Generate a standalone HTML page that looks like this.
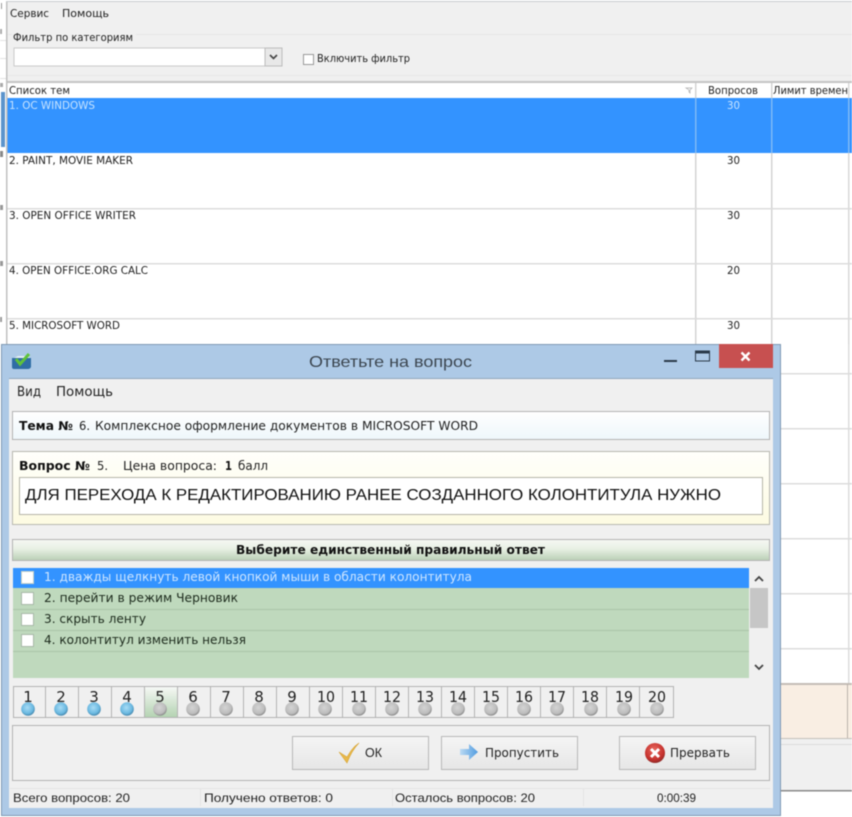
<!DOCTYPE html>
<html lang="ru"><head><meta charset="utf-8"><title>Ответьте на вопрос</title>
<style>
html,body{margin:0;padding:0;background:#fff;width:852px;height:817px;overflow:hidden}
svg{display:block;filter:blur(.5px)}
text{font-family:"DejaVu Sans",sans-serif;font-size:11px;fill:#222}
.l{font-family:"Liberation Sans",sans-serif}
.b{font-weight:bold;fill:#111}
.n{font-size:15px;fill:#222;text-anchor:middle}
</style></head><body>
<svg width="852" height="817" viewBox="0 0 852 817" xmlns="http://www.w3.org/2000/svg">
<defs>
<linearGradient id="hd" x1="0" y1="0" x2="0" y2="1"><stop offset="0" stop-color="#f6f8f4"/><stop offset=".45" stop-color="#e8f0e4"/><stop offset="1" stop-color="#b9cfb5"/></linearGradient>
<linearGradient id="th" x1="0" y1="0" x2="0" y2="1"><stop offset="0" stop-color="#fff"/><stop offset="1" stop-color="#eef7fb"/></linearGradient>
<linearGradient id="qu" x1="0" y1="0" x2="0" y2="1"><stop offset="0" stop-color="#fffffb"/><stop offset="1" stop-color="#fdfbe2"/></linearGradient>
<linearGradient id="bt" x1="0" y1="0" x2="0" y2="1"><stop offset="0" stop-color="#f5f5f5"/><stop offset="1" stop-color="#e6e6e6"/></linearGradient>
<linearGradient id="cur" x1="0" y1="0" x2="0" y2="1"><stop offset="0" stop-color="#f6f8f5"/><stop offset="1" stop-color="#b4d3b2"/></linearGradient>
<radialGradient id="bb" cx=".45" cy=".4" r=".62"><stop offset="0" stop-color="#a8dcf5"/><stop offset=".7" stop-color="#6ab8e0"/><stop offset="1" stop-color="#3f7fa5"/></radialGradient>
<radialGradient id="bg" cx=".45" cy=".4" r=".62"><stop offset="0" stop-color="#d4d4d4"/><stop offset=".72" stop-color="#bcbcbc"/><stop offset="1" stop-color="#7e7e7e"/></radialGradient>
<radialGradient id="rd" cx=".45" cy=".35" r=".7"><stop offset="0" stop-color="#ea6a60"/><stop offset=".7" stop-color="#c4302c"/><stop offset="1" stop-color="#7e2a28"/></radialGradient>
<linearGradient id="ar" x1="0" y1="0" x2="1" y2="0"><stop offset="0" stop-color="#bcdaf3"/><stop offset="1" stop-color="#4f9be0"/></linearGradient>
</defs>

<!-- background window -->
<rect width="852" height="817" fill="#fff"/>
<rect x="0" y="1" width="852" height="1" fill="#c8ccd0"/>
<rect x="7" y="2" width="845" height="80" fill="#f0f0f0"/>
<rect x="8" y="34" width="844" height="1" fill="#e6e6e6"/>
<rect x="8" y="75" width="844" height="1" fill="#e8e8e8"/>
<rect x="6" y="81" width="846" height="2" fill="#c4c4c4"/>
<text x="10" y="17" textLength="39" lengthAdjust="spacingAndGlyphs">Сервис</text>
<text x="62" y="17" textLength="47" lengthAdjust="spacingAndGlyphs">Помощь</text>
<rect x="12" y="30" width="124" height="12" fill="#f0f0f0"/>
<text x="13" y="41" font-size="10" textLength="120" lengthAdjust="spacingAndGlyphs">Фильтр по категориям</text>
<rect x="14" y="48" width="268" height="18" fill="#fff" stroke="#cacaca"/>
<rect x="265" y="48" width="17" height="18" fill="#e8e8e8" stroke="#bcbcbc"/>
<path d="M270 55l3.500 3.500 3.500-3.500" fill="none" stroke="#444" stroke-width="1.600"/>
<rect x="303.500" y="54.500" width="10" height="10" fill="#fff" stroke="#9a9a9a"/>
<text x="317" y="62" textLength="93" lengthAdjust="spacingAndGlyphs">Включить фильтр</text>

<!-- table -->
<rect x="7" y="83" width="845" height="15" fill="#fff"/>
<text x="9" y="94" textLength="61" lengthAdjust="spacingAndGlyphs">Список тем</text>
<path d="M686 88h6l-2 2v3l-1-1v-2z" fill="none" stroke="#aaa" stroke-width=".7"/>
<text x="708" y="94" textLength="50" lengthAdjust="spacingAndGlyphs">Вопросов</text>
<text x="773" y="94" textLength="75" lengthAdjust="spacingAndGlyphs">Лимит времен</text>
<rect x="695" y="83" width="1.500" height="261" fill="#d4d4d4"/>
<rect x="771" y="83" width="1.500" height="261" fill="#d4d4d4"/>
<rect x="848" y="83" width="1.500" height="261" fill="#d8d8d8"/>
<rect x="7" y="98" width="845" height="55" fill="#3393ff"/>
<rect x="695" y="98" width="1.500" height="55" fill="#7db8f5"/>
<rect x="771" y="98" width="1.500" height="55" fill="#7db8f5"/>
<rect x="848" y="98" width="1.500" height="55" fill="#7db8f5"/>
<rect x="7" y="208" width="845" height="1.500" fill="#dcdcdc"/>
<rect x="7" y="263" width="845" height="1.500" fill="#dcdcdc"/>
<rect x="7" y="318" width="845" height="1.500" fill="#dcdcdc"/>
<text x="9" y="109" textLength="86" lengthAdjust="spacingAndGlyphs" style="fill:#c8e4ff">1. ОС WINDOWS</text>
<text x="727" y="109" textLength="13" lengthAdjust="spacingAndGlyphs" style="fill:#c8e4ff">30</text>
<text x="9" y="164" textLength="124" lengthAdjust="spacingAndGlyphs">2. PAINT, MOVIE MAKER</text>
<text x="727" y="164" textLength="13" lengthAdjust="spacingAndGlyphs">30</text>
<text x="9" y="219" textLength="127" lengthAdjust="spacingAndGlyphs">3. OPEN OFFICE WRITER</text>
<text x="727" y="219" textLength="13" lengthAdjust="spacingAndGlyphs">30</text>
<text x="9" y="274" textLength="139" lengthAdjust="spacingAndGlyphs">4. OPEN OFFICE.ORG CALC</text>
<text x="727" y="274" textLength="13" lengthAdjust="spacingAndGlyphs">20</text>
<text x="9" y="329" textLength="111" lengthAdjust="spacingAndGlyphs">5. MICROSOFT WORD</text>
<text x="727" y="329" textLength="13" lengthAdjust="spacingAndGlyphs">30</text>

<!-- window continues to the right of the dialog -->
<rect x="781" y="373" width="71" height="1.500" fill="#dcdcdc"/>
<rect x="781" y="428" width="71" height="1.500" fill="#dcdcdc"/>
<rect x="781" y="483" width="71" height="1.500" fill="#dcdcdc"/>
<rect x="781" y="538" width="71" height="1.500" fill="#dcdcdc"/>
<rect x="781" y="593" width="71" height="1.500" fill="#dcdcdc"/>
<rect x="781" y="648" width="71" height="1.500" fill="#dcdcdc"/>
<rect x="848" y="344" width="1.500" height="340" fill="#dcdcdc"/>
<rect x="781" y="684" width="71" height="55" fill="#f9eee3"/>
<rect x="781" y="683" width="71" height="2" fill="#c4bdb6"/>
<rect x="847" y="684" width="1" height="55" fill="#b9b2ab"/>
<rect x="781" y="739" width="71" height="51" fill="#f0f0f0"/>
<rect x="781" y="738" width="71" height="1" fill="#c4c0bb"/>
<rect x="781" y="744" width="71" height="1" fill="#dcdcdc"/>
<rect x="781" y="790" width="71" height="1.500" fill="#8a8a8a"/>

<!-- left strip fragments -->
<rect x="0" y="0" width="6" height="344" fill="#fff"/>
<rect x="6" y="2" width="1.500" height="342" fill="#c0c0c0"/>
<rect x="1" y="3" width="1" height="6" fill="#999"/>
<rect x="0" y="29" width="2" height="5" fill="#aaa"/>
<rect x="0" y="40" width="6" height="1" fill="#e2e2e2"/>
<rect x="0" y="58" width="6" height="1" fill="#e2e2e2"/>
<rect x="0" y="78" width="6" height="1" fill="#e2e2e2"/>
<rect x="0" y="83" width="3" height="4" fill="#aaa"/>
<rect x="1" y="92" width="4" height="55" fill="#5c94cc"/>
<rect x="0" y="151" width="3" height="6" fill="#888"/>
<rect x="0" y="205" width="3" height="5" fill="#999"/>
<rect x="0" y="261" width="3" height="5" fill="#999"/>
<rect x="0" y="317" width="2" height="5" fill="#999"/>

<!-- dialog -->
<rect x="1" y="344" width="780" height="472" fill="#adc9e6"/>
<rect x="1.500" y="344.500" width="779" height="471" fill="none" stroke="#7f99b3"/>
<rect x="9" y="378" width="764" height="430" fill="#f0f0f0"/>
<rect x="9" y="378" width="764" height="1" fill="#90a6bc"/>
<rect x="719" y="344" width="54" height="24" fill="#c75050"/>
<path d="M741.500 352.500l8 8m0-8l-8 8" stroke="#fff" stroke-width="2.400" fill="none"/>
<rect x="664" y="360" width="13" height="2" fill="#2b3a4a"/>
<rect x="695.500" y="351" width="14" height="10" fill="none" stroke="#2b3a4a"/>
<rect x="695" y="351" width="15" height="2.500" fill="#2b3a4a"/>
<!-- dialog icon -->
<path d="M12 358h19v9q-1 2-3 2H14q-2 0-2-2z" fill="#2f6da5"/>
<path d="M14 358l4-2h9l3 2z" fill="#e6eef5"/>
<path d="M16 359l4 5 9-10" fill="none" stroke="#5fc23a" stroke-width="3"/>
<text x="309" y="367" class="l" style="font-size:16px;fill:#3c4650" textLength="163" lengthAdjust="spacingAndGlyphs">Ответьте на вопрос</text>
<text x="17" y="396" style="font-size:13px" textLength="24" lengthAdjust="spacingAndGlyphs">Вид</text>
<text x="56" y="396" style="font-size:13px" textLength="57" lengthAdjust="spacingAndGlyphs">Помощь</text>

<!-- theme -->
<rect x="12.500" y="411.500" width="757" height="28" fill="url(#th)" stroke="#b3b3b3"/>
<text x="19" y="430" class="b" style="font-size:12px" textLength="54" lengthAdjust="spacingAndGlyphs">Тема №</text>
<text x="79" y="430" style="font-size:12px" textLength="11" lengthAdjust="spacingAndGlyphs">6.</text>
<text x="95" y="430" style="font-size:12px" textLength="383" lengthAdjust="spacingAndGlyphs">Комплексное оформление документов в MICROSOFT WORD</text>

<!-- question -->
<rect x="12.500" y="451.500" width="757" height="73" fill="url(#qu)" stroke="#b8b8b0"/>
<text x="19" y="470" class="b" style="font-size:12px" textLength="71" lengthAdjust="spacingAndGlyphs">Вопрос №</text>
<text x="97" y="470" style="font-size:12px" textLength="11" lengthAdjust="spacingAndGlyphs">5.</text>
<text x="123" y="470" style="font-size:12px" textLength="94" lengthAdjust="spacingAndGlyphs">Цена вопроса:</text>
<text x="225" y="470" class="b" style="font-size:12px" textLength="7" lengthAdjust="spacingAndGlyphs">1</text>
<text x="238" y="470" style="font-size:12px" textLength="30" lengthAdjust="spacingAndGlyphs">балл</text>
<rect x="19.500" y="477.500" width="743" height="37" fill="#fff" stroke="#b5b5a8"/>
<text x="25" y="500" class="l" style="font-size:16px;fill:#111" textLength="696" lengthAdjust="spacingAndGlyphs">ДЛЯ ПЕРЕХОДА К РЕДАКТИРОВАНИЮ РАНЕЕ СОЗДАННОГО КОЛОНТИТУЛА НУЖНО</text>

<!-- answer header -->
<rect x="12.500" y="539.500" width="757" height="21" fill="url(#hd)" stroke="#b3b3b3"/>
<text x="236" y="554" class="b" style="font-size:12px" textLength="309" lengthAdjust="spacingAndGlyphs">Выберите единственный правильный ответ</text>

<!-- answers -->
<rect x="13" y="568" width="736" height="110" fill="#bfd9bd"/>
<rect x="13" y="568" width="736" height="20" fill="#3393ff"/>
<rect x="13" y="609" width="736" height="1" fill="#aac5a9"/>
<rect x="13" y="630" width="736" height="1" fill="#aac5a9"/>
<rect x="13" y="651" width="736" height="1" fill="#aac5a9"/>
<rect x="21.500" y="571.500" width="12" height="12" fill="#fff" stroke="#c8d2c8"/>
<rect x="21.500" y="592.500" width="12" height="12" fill="#fff" stroke="#a8b8a8"/>
<rect x="21.500" y="613.500" width="12" height="12" fill="#fff" stroke="#a8b8a8"/>
<rect x="21.500" y="634.500" width="12" height="12" fill="#fff" stroke="#a8b8a8"/>
<text x="44" y="581" style="font-size:12px;fill:#cfe6ff" textLength="428" lengthAdjust="spacingAndGlyphs">1. дважды щелкнуть левой кнопкой мыши в области колонтитула</text>
<text x="44" y="602" style="font-size:12px;fill:#1c2a1c" textLength="194" lengthAdjust="spacingAndGlyphs">2. перейти в режим Черновик</text>
<text x="44" y="623" style="font-size:12px;fill:#1c2a1c" textLength="102" lengthAdjust="spacingAndGlyphs">3. скрыть ленту</text>
<text x="44" y="644" style="font-size:12px;fill:#1c2a1c" textLength="202" lengthAdjust="spacingAndGlyphs">4. колонтитул изменить нельзя</text>
<rect x="749" y="568" width="19" height="110" fill="#f0f0f0"/>
<rect x="750" y="588" width="18" height="40" fill="#c6c6c6"/>
<path d="M755 581l4-4 4 4" fill="none" stroke="#444" stroke-width="1.800"/>
<path d="M755 665l4 4 4-4" fill="none" stroke="#444" stroke-width="1.800"/>

<!-- number buttons -->
<rect x="13.500" y="686.500" width="660" height="31" fill="#f0f0f0" stroke="#b3b3b3"/>
<rect x="145" y="687" width="32" height="30" fill="url(#cur)"/>
<path d="M45.500 686v32M78.500 686v32M111.500 686v32M144.500 686v32M177.500 686v32M210.500 686v32M243.500 686v32M276.500 686v32M309.500 686v32M342.500 686v32M375.500 686v32M408.500 686v32M441.500 686v32M474.500 686v32M507.500 686v32M540.500 686v32M573.500 686v32M606.500 686v32M639.500 686v32" stroke="#b3b3b3" fill="none"/>
<g>
<text x="28" y="702" class="n">1</text><text x="61" y="702" class="n">2</text><text x="94" y="702" class="n">3</text><text x="127" y="702" class="n">4</text><text x="160" y="702" class="n">5</text><text x="193" y="702" class="n">6</text><text x="226" y="702" class="n">7</text><text x="259" y="702" class="n">8</text><text x="292" y="702" class="n">9</text><text x="326" y="702" class="n" textLength="18" lengthAdjust="spacingAndGlyphs">10</text><text x="359" y="702" class="n" textLength="18" lengthAdjust="spacingAndGlyphs">11</text><text x="392" y="702" class="n" textLength="18" lengthAdjust="spacingAndGlyphs">12</text><text x="425" y="702" class="n" textLength="18" lengthAdjust="spacingAndGlyphs">13</text><text x="458" y="702" class="n" textLength="18" lengthAdjust="spacingAndGlyphs">14</text><text x="491" y="702" class="n" textLength="18" lengthAdjust="spacingAndGlyphs">15</text><text x="524" y="702" class="n" textLength="18" lengthAdjust="spacingAndGlyphs">16</text><text x="557" y="702" class="n" textLength="18" lengthAdjust="spacingAndGlyphs">17</text><text x="590" y="702" class="n" textLength="18" lengthAdjust="spacingAndGlyphs">18</text><text x="624" y="702" class="n" textLength="18" lengthAdjust="spacingAndGlyphs">19</text><text x="657" y="702" class="n" textLength="18" lengthAdjust="spacingAndGlyphs">20</text>
</g>
<g>
<circle cx="28" cy="709" r="6.800" fill="url(#bb)"/><circle cx="61" cy="709" r="6.800" fill="url(#bb)"/><circle cx="94" cy="709" r="6.800" fill="url(#bb)"/><circle cx="127" cy="709" r="6.800" fill="url(#bb)"/>
<circle cx="160" cy="709" r="6.800" fill="url(#bg)"/><circle cx="193" cy="709" r="6.800" fill="url(#bg)"/><circle cx="226" cy="709" r="6.800" fill="url(#bg)"/><circle cx="259" cy="709" r="6.800" fill="url(#bg)"/><circle cx="292" cy="709" r="6.800" fill="url(#bg)"/><circle cx="325" cy="709" r="6.800" fill="url(#bg)"/><circle cx="359" cy="709" r="6.800" fill="url(#bg)"/><circle cx="392" cy="709" r="6.800" fill="url(#bg)"/><circle cx="425" cy="709" r="6.800" fill="url(#bg)"/><circle cx="458" cy="709" r="6.800" fill="url(#bg)"/><circle cx="491" cy="709" r="6.800" fill="url(#bg)"/><circle cx="524" cy="709" r="6.800" fill="url(#bg)"/><circle cx="557" cy="709" r="6.800" fill="url(#bg)"/><circle cx="591" cy="709" r="6.800" fill="url(#bg)"/><circle cx="624" cy="709" r="6.800" fill="url(#bg)"/><circle cx="657" cy="709" r="6.800" fill="url(#bg)"/>
</g>

<!-- action panel -->
<rect x="12.500" y="725.500" width="757" height="55" fill="#f0f0f0" stroke="#b3b3b3"/>
<rect x="292.500" y="736.500" width="136" height="33" fill="url(#bt)" stroke="#b8b8b8"/>
<rect x="441.500" y="736.500" width="136" height="33" fill="url(#bt)" stroke="#b8b8b8"/>
<rect x="619.500" y="736.500" width="136" height="33" fill="url(#bt)" stroke="#b8b8b8"/>
<path d="M339 752l8 11c3-8 7-15 12-20-6 4-9 9-12 14z" fill="#e8b84a" stroke="#d9a533" stroke-width=".6"/>
<text x="365" y="757" class="l" style="font-size:13px;fill:#222" textLength="17" lengthAdjust="spacingAndGlyphs">ОК</text>
<path d="M460 749h9v-5l9 8-9 8v-5h-9z" fill="url(#ar)"/>
<text x="485" y="757" style="font-size:12px" textLength="74" lengthAdjust="spacingAndGlyphs">Пропустить</text>
<circle cx="655" cy="753" r="10" fill="url(#rd)"/>
<path d="M651 749l8 8m0-8l-8 8" stroke="#fff" stroke-width="3" fill="none"/>
<text x="670" y="757" style="font-size:12px" textLength="60" lengthAdjust="spacingAndGlyphs">Прервать</text>

<!-- status bar -->
<rect x="10" y="788" width="760" height="1" fill="#e4e4e4"/>
<rect x="200" y="788" width="1" height="18" fill="#e4e4e4"/>
<rect x="392" y="788" width="1" height="18" fill="#e4e4e4"/>
<rect x="583" y="788" width="1" height="18" fill="#e4e4e4"/>
<text x="13" y="802" class="l" style="font-size:12px;fill:#222" textLength="117" lengthAdjust="spacingAndGlyphs">Всего вопросов: 20</text>
<text x="204" y="802" class="l" style="font-size:12px;fill:#222" textLength="129" lengthAdjust="spacingAndGlyphs">Получено ответов: 0</text>
<text x="395" y="802" class="l" style="font-size:12px;fill:#222" textLength="140" lengthAdjust="spacingAndGlyphs">Осталось вопросов: 20</text>
<text x="657" y="802" class="l" style="font-size:12px;fill:#222" textLength="39" lengthAdjust="spacingAndGlyphs">0:00:39</text>
</svg>
</body></html>
